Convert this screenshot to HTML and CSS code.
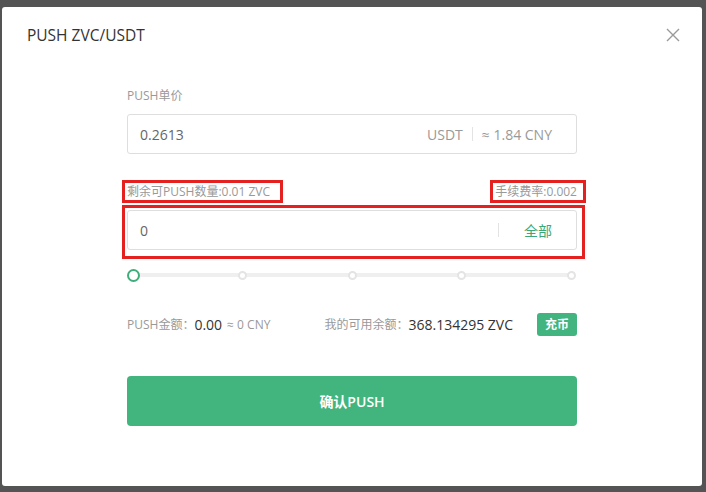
FILE: index.html
```html
<!DOCTYPE html>
<html lang="zh-CN">
<head>
<meta charset="utf-8">
<title>PUSH ZVC/USDT</title>
<link rel="stylesheet" href="styles.css">
</head>
<body>
<div class="modal">
  <div class="modal-header">
    <span class="modal-title">PUSH ZVC/USDT</span>
    <span class="close">
      <svg width="14" height="14" viewBox="0 0 14 14"><path d="M1 1 L13 13 M13 1 L1 13" stroke="#9a9a9a" stroke-width="1.4" fill="none"/></svg>
    </span>
  </div>
  <div class="form">
    <div class="label">PUSH单价</div>
    <div class="field">
      <span class="value">0.2613</span>
      <span class="unit">USDT</span>
      <span class="sep"></span>
      <span class="unit">≈ 1.84 CNY</span>
    </div>

    <div class="info-row">
      <span class="hl hl-left">剩余可PUSH数量:0.01 ZVC</span>
      <span class="hl hl-right">手续费率:0.002</span>
    </div>
    <div class="hl-box">
      <div class="field">
        <span class="value">0</span>
        <span class="sep sep-all"></span>
        <span class="all">全部</span>
      </div>
    </div>

    <div class="slider">
      <span class="dot-wrap"><span class="dot dot-active"></span></span>
      <span class="dot-wrap"><span class="dot"></span></span>
      <span class="dot-wrap"><span class="dot"></span></span>
      <span class="dot-wrap"><span class="dot"></span></span>
      <span class="dot-wrap"><span class="dot"></span></span>
    </div>

    <div class="summary">
      <span class="muted">PUSH金额：</span>
      <span class="strong">0.00</span>
      <span class="muted approx">≈ 0 CNY</span>
      <span class="balance">
        <span class="muted">我的可用余额：</span><span class="strong">368.134295 ZVC</span>
      </span>
      <span class="deposit">充币</span>
    </div>

    <div class="submit">确认PUSH</div>
  </div>
</div>
</body>
</html>
```

FILE: styles.css
```css
* { box-sizing: border-box; }

html, body {
  margin: 0;
  padding: 0;
}

body {
  background: #545454;
  width: 706px;
  height: 492px;
  overflow: hidden;
  font-family: "Open Sans", "Noto Sans CJK SC", sans-serif;
  color: #333;
  padding: 7px 4px 0 2px;
}

.modal {
  background: #fff;
  border-radius: 3px;
  width: 700px;
  height: 479px;
}

.modal-header {
  display: flex;
  align-items: center;
  justify-content: space-between;
  padding: 16px 22px 0 25px;
  height: 40px;
}

.modal-title {
  font-size: 15.5px;
  line-height: 24px;
  color: #333;
}

.close {
  display: flex;
  width: 14px;
  height: 14px;
}

.form {
  width: 450px;
  margin: 40px auto 0;
}

.label {
  font-size: 12px;
  line-height: 18px;
  color: #999;
  margin-bottom: 9px;
}

.field {
  display: flex;
  align-items: center;
  height: 40px;
  border: 1px solid #dedede;
  border-radius: 3px;
  padding: 0 24px 0 12px;
  font-size: 14px;
}

.value {
  color: #666;
  flex: 1;
}

.unit {
  color: #999;
}

.sep {
  width: 1px;
  height: 14px;
  background: #e3e3e3;
  margin: 0 9px;
}

.sep-all {
  margin: 0 25px 0 0;
}

.all {
  color: #3aa877;
}

.info-row {
  display: flex;
  justify-content: space-between;
  margin-top: 26px;
  font-size: 12px;
  color: #999;
}

.hl {
  display: inline-block;
  border: 3px solid #e5211f;
  line-height: 17px;
  height: 23px;
}

.hl-left {
  margin-left: -5px;
  padding: 0 10px 0 2px;
}

.hl-right {
  margin-right: -9px;
  padding: 0 6px 0 2px;
}

.hl-box {
  border: 3px solid #e5211f;
  margin: 2px -8px 0 -5px;
  padding: 2px 5px 6px 2px;
}

.slider {
  display: flex;
  justify-content: space-between;
  align-items: center;
  height: 14px;
  margin: 9px -1px 0;
  background: linear-gradient(#efefef, #efefef) no-repeat center / calc(100% - 14px) 4px;
}

.dot-wrap {
  width: 14px;
  height: 14px;
  display: flex;
  align-items: center;
  justify-content: center;
}

.dot {
  width: 9px;
  height: 9px;
  border-radius: 50%;
  border: 2px solid #e4e4e4;
  background: #fff;
}

.dot-active {
  width: 13px;
  height: 13px;
  border: 2px solid #3fae7b;
}

.summary {
  display: flex;
  align-items: center;
  margin-top: 30px;
  height: 24px;
}

.muted {
  font-size: 12px;
  color: #999;
}

.strong {
  font-size: 14px;
  color: #333;
}

.approx {
  margin-left: 5px;
}

.balance {
  margin-left: auto;
  display: flex;
  align-items: center;
}

.deposit {
  margin-left: 24px;
  width: 40px;
  height: 23px;
  border-radius: 3px;
  background: #41b47f;
  color: #fff;
  font-size: 12px;
  font-weight: bold;
  display: flex;
  align-items: center;
  justify-content: center;
}

.submit {
  margin-top: 40px;
  height: 50px;
  border-radius: 4px;
  background: #42b57f;
  color: #fff;
  font-size: 14px;
  font-weight: 600;
  display: flex;
  align-items: center;
  justify-content: center;
}
```
